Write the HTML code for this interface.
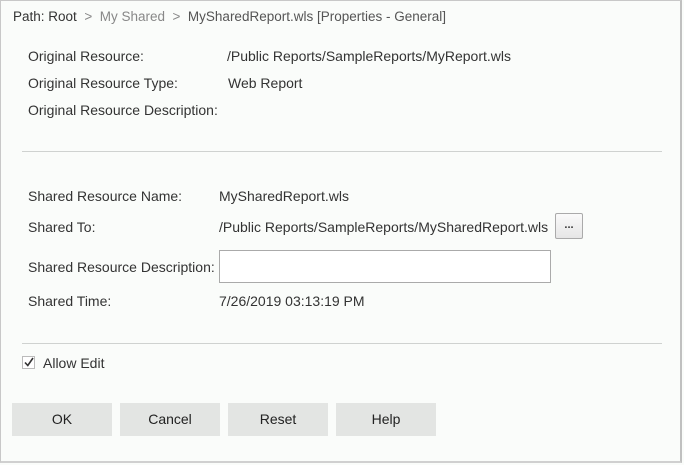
<!DOCTYPE html>
<html><head><style>
html,body{margin:0;padding:0}
body{width:684px;height:465px;position:relative;background:#fafcfa;font-family:"Liberation Sans",sans-serif;font-size:14px;color:#333;overflow:hidden}
.frame{position:absolute;left:0;top:0;width:682px;height:463px;border:1px solid #c8c8c8;border-right:2px solid #c0c0c0;border-bottom:2px solid #d0d0d0;box-sizing:border-box}
.t{position:absolute;white-space:nowrap}
.sep{position:absolute;left:22px;width:640px;height:1px;background:#cfd2d0}
.btn{position:absolute;top:403px;width:100px;height:33px;background:#e3e5e3;text-align:center;line-height:33px;font-size:14px;color:#222}
</style></head><body>
<div class="frame"></div>
<div class="t" style="left:13px;top:9px;font-size:13.5px"><span style="color:#333">Path: Root</span> <span style="color:#888">&nbsp;&gt;&nbsp;</span> <span style="color:#888">My Shared</span> <span style="color:#888">&nbsp;&gt;&nbsp;</span> <span style="color:#555">MySharedReport.wls [Properties - General]</span></div>
<div class="t" style="left:28px;top:48px">Original Resource:</div>
<div class="t" style="left:227px;top:48px">/Public Reports/SampleReports/MyReport.wls</div>
<div class="t" style="left:28px;top:75px">Original Resource Type:</div>
<div class="t" style="left:228px;top:75px">Web Report</div>
<div class="t" style="left:28px;top:102px">Original Resource Description:</div>
<div class="sep" style="top:151px"></div>
<div class="t" style="left:28px;top:188px">Shared Resource Name:</div>
<div class="t" style="left:219px;top:188px">MySharedReport.wls</div>
<div class="t" style="left:28px;top:219px">Shared To:</div>
<div class="t" style="left:219px;top:219px">/Public Reports/SampleReports/MySharedReport.wls</div>
<div style="position:absolute;left:555px;top:213px;width:28px;height:26px;border:1px solid #aaa;box-sizing:border-box;background:linear-gradient(#fafafa,#e6e6e6);border-radius:2px;text-align:center;font-size:11px;line-height:22px;font-weight:bold">...</div>
<div class="t" style="left:28px;top:259px">Shared Resource Description:</div>
<div style="position:absolute;left:219px;top:250px;width:332px;height:33px;border:1px solid #aaa;box-sizing:border-box;background:#fff"></div>
<div class="t" style="left:28px;top:293px">Shared Time:</div>
<div class="t" style="left:219px;top:293px">7/26/2019 03:13:19 PM</div>
<div class="sep" style="top:343px"></div>
<div style="position:absolute;left:22px;top:356px;width:13px;height:13px;border:1px solid #bbb;box-sizing:border-box;background:#fff"></div>
<svg style="position:absolute;left:22px;top:355px" width="14" height="14"><path d="M3 7.5 L5.8 10.5 L11 3" fill="none" stroke="#333" stroke-width="1.6"/></svg>
<div class="t" style="left:43px;top:355px">Allow Edit</div>
<div class="btn" style="left:12px">OK</div>
<div class="btn" style="left:120px">Cancel</div>
<div class="btn" style="left:228px">Reset</div>
<div class="btn" style="left:336px">Help</div>
</body></html>
